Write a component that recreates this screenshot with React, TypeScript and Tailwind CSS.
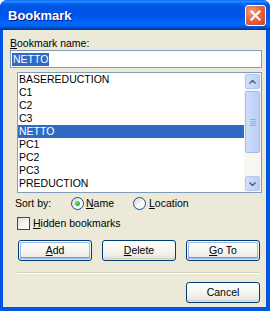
import React from 'react';

/**
 * Bookmark dialog - Windows XP (Luna) style
 */

const items = ['BASEREDUCTION', 'C1', 'C2', 'C3', 'NETTO', 'PC1', 'PC2', 'PC3', 'PREDUCTION'];

const font = { fontFamily: '"Liberation Sans", Arial, sans-serif' };

const XpButton = ({
  children,
  active = false,
  className = '',
}: {
  children: React.ReactNode;
  active?: boolean;
  className?: string;
}) => (
  <div
    className={`h-[21px] w-[74px] rounded-[3px] border border-[#003C74] bg-[linear-gradient(to_bottom,#FFFFFF_0%,#F4F3EE_60%,#E3E1D6_100%)] p-px ${className}`}
  >
    <div
      className={`flex h-full w-full items-center justify-center rounded-[2px] text-black ${
        active
          ? 'shadow-[inset_0_0_0_1px_#9DB9EB,inset_0_-1px_0_1px_#7DA2CE]'
          : 'shadow-[inset_0_-1px_0_0_#D6D0C5]'
      }`}
    >
      {children}
    </div>
  </div>
);

const Radio = ({ checked }: { checked?: boolean }) => (
  <span className="flex h-[13px] w-[13px] items-center justify-center rounded-full border border-[#1C5180] bg-[linear-gradient(135deg,#DCDBD4_0%,#F6F6F3_55%,#FFFFFF_100%)]">
    {checked && (
      <span className="h-[5px] w-[5px] rounded-full bg-[radial-gradient(circle_at_35%_35%,#5FE35F,#21A121)]" />
    )}
  </span>
);

const App = () => {
  return (
    <div className="h-[311px] w-[270px] overflow-hidden bg-white text-[10.5px] leading-[13px]" style={font}>
      <div className="flex h-full flex-col rounded-t-[7px] bg-[#0055E5]">
        {/* Title bar */}
        <div className="flex h-[30px] shrink-0 items-center justify-between rounded-t-[7px] bg-[linear-gradient(to_bottom,#0058EE_0%,#3593FF_4%,#288EFF_6%,#127DFF_8%,#036FFC_10%,#0262EE_14%,#0057E5_20%,#0054E3_24%,#0055EB_56%,#005BF5_66%,#026AFE_76%,#0062EF_86%,#0052D6_92%,#0040AB_96%,#003092_100%)] pl-[8px] pr-[4px]">
          <span className="text-[13px] font-bold text-white [text-shadow:1px_1px_0_#0A1883]">Bookmark</span>
          <div className="flex h-[21px] w-[21px] items-center justify-center rounded-[3px] border border-white bg-[radial-gradient(circle_at_30%_30%,#F0A085_0%,#E06A45_45%,#C9431E_100%)]">
            <svg width="11" height="11" viewBox="0 0 11 11">
              <path d="M1.5 1.5 L9.5 9.5 M9.5 1.5 L1.5 9.5" stroke="white" strokeWidth="2" strokeLinecap="square" />
            </svg>
          </div>
        </div>

        {/* Body */}
        <div className="ml-[3px] mr-[4px] mb-[4px] flex-1 bg-[#ECE9D8] pl-[7px] pr-[5px] pt-[7px] text-black">
          <div className="h-[13px]">
            <span className="underline">B</span>ookmark name:
          </div>

          {/* Name input */}
          <div className="flex h-[18px] w-[252px] items-center border border-[#7F9DB9] bg-white pl-[1px]">
            <span className="bg-[#316AC5] px-[1px] text-white">NETTO</span>
          </div>

          {/* Bookmark list */}
          <div className="ml-[7px] mt-[4px] flex h-[121px] w-[245px] border border-[#7F9DB9] bg-white">
            <div className="flex-1 overflow-hidden">
              {items.map((item) => (
                <div
                  key={item}
                  className={`h-[13px] pl-[1px] ${item === 'NETTO' ? 'bg-[#316AC5] text-white' : ''}`}
                >
                  {item}
                </div>
              ))}
            </div>
            {/* Scrollbar */}
            <div className="flex w-[17px] flex-col bg-[#F7F6F1] p-px">
              <div className="flex h-[15px] items-center justify-center rounded-[2px] border border-[#B3C6EE] bg-[linear-gradient(to_right,#D3E0FD,#B9CDF8)]">
                <svg width="7" height="4" viewBox="0 0 7 4">
                  <path d="M0.5 3.5 L3.5 0.5 L6.5 3.5" stroke="#4D6185" strokeWidth="1.5" fill="none" />
                </svg>
              </div>
              <div className="mt-[2px] flex h-[62px] items-center justify-center rounded-[2px] border border-[#A4BAEA] bg-[linear-gradient(to_right,#CFDDFD,#BACDF8)]">
                <div className="flex flex-col gap-[1px]">
                  <span className="h-px w-[6px] bg-[#8CB0F8]" />
                  <span className="h-px w-[6px] bg-[#8CB0F8]" />
                  <span className="h-px w-[6px] bg-[#8CB0F8]" />
                  <span className="h-px w-[6px] bg-[#8CB0F8]" />
                </div>
              </div>
              <div className="flex-1" />
              <div className="flex h-[15px] items-center justify-center rounded-[2px] border border-[#B3C6EE] bg-[linear-gradient(to_right,#D3E0FD,#B9CDF8)]">
                <svg width="7" height="4" viewBox="0 0 7 4">
                  <path d="M0.5 0.5 L3.5 3.5 L6.5 0.5" stroke="#4D6185" strokeWidth="1.5" fill="none" />
                </svg>
              </div>
            </div>
          </div>

          {/* Sort by */}
          <div className="ml-[5px] mt-[2px] flex h-[16px] items-center">
            <span className="w-[56px]">Sort by:</span>
            <Radio checked />
            <span className="ml-[2px] w-[47px]">
              <span className="underline">N</span>ame
            </span>
            <Radio />
            <span className="ml-[3px]">
              <span className="underline">L</span>ocation
            </span>
          </div>

          {/* Hidden bookmarks */}
          <div className="ml-[7px] mt-[6px] flex h-[13px] items-center gap-[3px]">
            <span className="h-[13px] w-[13px] border border-[#1C5180] bg-[linear-gradient(135deg,#DCDBD4_0%,#F6F6F3_55%,#FFFFFF_100%)]" />
            <span>
              <span className="underline">H</span>idden bookmarks
            </span>
          </div>

          {/* Action buttons */}
          <div className="ml-[8px] mt-[10px] flex gap-[10px]">
            <XpButton active>
              <span className="underline">A</span>dd
            </XpButton>
            <XpButton>
              <span className="underline">D</span>elete
            </XpButton>
            <XpButton active>
              <span className="underline">G</span>o To
            </XpButton>
          </div>

          <div className="ml-[7px] mt-[11px] h-[2px] w-[243px] border-t border-[#D0D0BF] border-b border-b-white" />

          <div className="mt-[8px] flex justify-end pr-[1px]">
            <XpButton>Cancel</XpButton>
          </div>
        </div>
      </div>
    </div>
  );
};

export default App;
